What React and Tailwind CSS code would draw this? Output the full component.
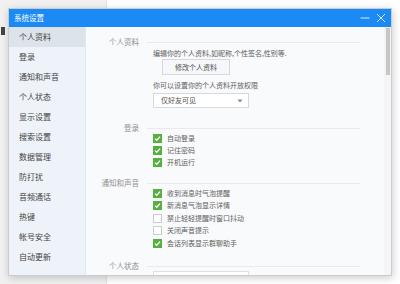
import React from "react";

const F = { fontFamily: '"Noto Sans CJK SC", "Noto Sans", sans-serif' };

const navItems = ["个人资料","登录","通知和声音","个人状态","显示设置","搜索设置","数据管理","防打扰","音频通话","热键","帐号安全","自动更新"];

function Check({ on, label, h = "h-[12px]" }) {
  return (
    <div className={`flex items-center ${h}`}>
      {on ? (
        <div className="w-[9px] h-[9px] bg-[#55b03e] flex items-center justify-center">
          <svg width="7" height="7" viewBox="0 0 7 7"><path d="M1 3.6 L2.8 5.3 L6 1.6" stroke="#fff" strokeWidth="1.3" fill="none"/></svg>
        </div>
      ) : (
        <div className="w-[9px] h-[9px] bg-white border border-[#cccccc]" />
      )}
      <span className="ml-[5px] text-[7px] leading-[9px] text-[#606060]">{label}</span>
    </div>
  );
}

function Header({ label, mt }) {
  return (
    <div className={`flex items-center h-[8px] ${mt}`}>
      <div className="w-[53px] text-right text-[7.5px] leading-[8px] text-[#909090]">{label}</div>
      <div className="flex-1 h-px bg-[#e8eaed] ml-[8px] mr-[24px]" />
    </div>
  );
}

export default function App() {
  return (
    <div className="relative w-[400px] h-[284px] overflow-hidden bg-[#fbfbfb]" style={F}>
      <div className="flex h-full">
        <div className="w-[107px] h-full bg-[#f1f1f1] border-r border-[#e2e2e2] pt-[27px]">
          <div className="w-[4px] h-[8px] bg-[#444] ml-[1px]" />
        </div>
        <div className="flex-1 bg-white" />
      </div>

      <div className="absolute left-[8px] top-[8px] w-[384px] h-[268px] flex flex-col border border-[#c9ccd0] shadow-[1px_2px_8px_rgba(0,0,0,0.2)] overflow-hidden">
        <div className="h-[18px] bg-[#1c8af5] flex items-center pl-[5px] pr-[5px] shrink-0">
          <span className="text-[7.5px] text-white leading-none">系统设置</span>
          <div className="flex-1" />
          <svg width="10" height="10" viewBox="0 0 10 10" className="mr-[6px]"><path d="M0.5 5 H9.5" stroke="#dbeaff" strokeWidth="1"/></svg>
          <svg width="10" height="10" viewBox="0 0 10 10"><path d="M1 1 L9 9 M9 1 L1 9" stroke="#dbeaff" strokeWidth="1"/></svg>
        </div>
        <div className="flex flex-1 min-h-0">
          <div className="w-[77px] bg-[#eef3f9] border-r border-[#e3e7ec] flex flex-col">
            {navItems.map((t, i) => (
              <div key={t} className={`h-[20px] flex items-center pl-[10px] text-[8px] text-[#444] ${i === 0 ? "bg-[#dde3ea]" : ""}`}>{t}</div>
            ))}
          </div>
          <div className="flex-1 bg-[#f9fafc] flex min-w-0">
            <div className="flex-1 flex flex-col pt-[11px] overflow-hidden">
              <Header label="个人资料" mt="mt-[0px]" />
              <div className="pl-[67px] flex flex-col">
                <div className="h-[10px] mt-[2px] text-[7px] leading-[10px] text-[#606060] whitespace-nowrap">编辑你的个人资料,如昵称,个性签名,性别等.</div>
                <div className="ml-[9px] mt-[1px] w-[68px] h-[16px] border border-[#d5d9de] bg-[#f5f7fa] flex items-center justify-center text-[7px] text-[#505050]">修改个人资料</div>
                <div className="h-[10px] mt-[5px] text-[7px] leading-[10px] text-[#606060]">你可以设置你的个人资料开放权限</div>
                <div className="mt-[3px] w-[96px] h-[15px] border border-[#d5d9de] bg-white flex items-center pl-[7px] pr-[5px] text-[7px] text-[#505050]">
                  <span className="flex-1">仅好友可见</span>
                  <svg width="6" height="4" viewBox="0 0 6 4"><path d="M0.5 0.5 H5.5 L3 3.5 Z" fill="#888"/></svg>
                </div>
              </div>
              <Header label="登录" mt="mt-[16px]" />
              <div className="pl-[67px] flex flex-col">
                <Check on label="自动登录" />
                <Check on label="记住密码" />
                <Check on label="开机运行" />
              </div>
              <Header label="通知和声音" mt="mt-[11px]" />
              <div className="pl-[67px] flex flex-col">
                <Check on h="h-[12.5px]" label="收到消息时气泡提醒" />
                <Check on h="h-[12.5px]" label="新消息气泡显示详情" />
                <Check h="h-[12.5px]" label="禁止轻轻提醒时窗口抖动" />
                <Check h="h-[12.5px]" label="关闭声音提示" />
                <Check on h="h-[12.5px]" label="会话列表显示群聊助手" />
              </div>
              <Header label="个人状态" mt="mt-[12.5px]" />
              <div className="pl-[67px]">
                <div className="mt-[1px] w-[96px] h-[15px] border border-[#dde0e4] bg-white" />
              </div>
            </div>
            <div className="w-[7px] pt-[1px] flex justify-center bg-[#f4f5f7]">
              <div className="w-[4px] h-[47px] bg-[#c6c6c6]" />
            </div>
          </div>
        </div>
      </div>
    </div>
  );
}
